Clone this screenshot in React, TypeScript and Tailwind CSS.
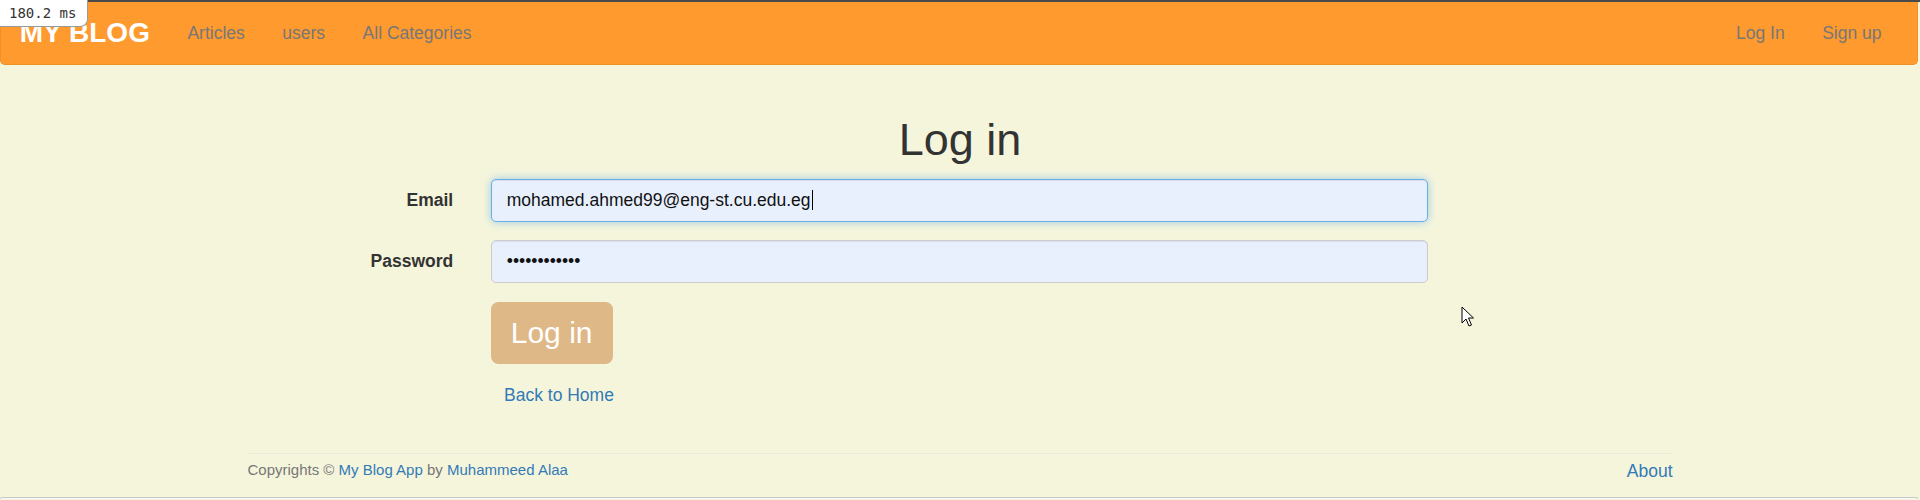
import React from 'react';

const navLinks = ['Articles', 'users', 'All Categories'];

function TimingBadge() {
  return (
    <div className="absolute left-0 top-0 z-20 flex h-[27px] items-center rounded-br-[8px] border-b border-r border-[#9a9a9a] bg-white pl-[9px] pr-[11px] font-['DejaVu_Sans_Mono','Liberation_Mono',monospace] text-[14px] leading-[18px] text-[#333]">
      180.2 ms
    </div>
  );
}

function Cursor() {
  return (
    <svg className="absolute left-[1461px] top-[306px] z-20" width="14" height="22" viewBox="0 0 14 22">
      <path d="M1 1 L1 17 L5 13 L8 20 L10.5 19 L7.5 12 L12.5 12 Z" fill="#fff" stroke="#000" strokeWidth="1" strokeLinejoin="round" />
    </svg>
  );
}

function Navbar() {
  return (
    <nav className="mr-[2px] flex h-[63px] items-center justify-between rounded-b-[5px] border border-t-0 border-[#ef9129] bg-[#fe9a2e] pl-[18.75px] pr-[16.75px]">
      <div className="flex items-center">
        <a href="#" className="pr-[18.75px] text-[28px] font-bold leading-[30px] text-white">
          MY BLOG
        </a>
        {navLinks.map((l) => (
          <a key={l} href="#" className="px-[18.75px] text-[17.5px] leading-[25px] text-[#777]">
            {l}
          </a>
        ))}
      </div>
      <div className="flex items-center">
        <a href="#" className="px-[18.75px] text-[17.5px] leading-[25px] text-[#777]">
          Log In
        </a>
        <a href="#" className="px-[18.75px] text-[17.5px] leading-[25px] text-[#777]">
          Sign up
        </a>
      </div>
    </nav>
  );
}

function LoginForm() {
  return (
    <form className="ml-[29.5px] w-[1170px]" onSubmit={(e) => e.preventDefault()}>
      <div className="mb-[18.75px] flex">
        <label className="w-[195px] shrink-0 pr-[18.75px] pt-[8.75px] text-right font-bold leading-[25px]">Email</label>
        <div className="flex-1 px-[18.75px]">
          <div
            role="textbox"
            className="flex h-[42.5px] items-center rounded-[5px] border border-[#66afe9] bg-[#e8f0fe] px-[15px] text-[17.5px] text-[#111] shadow-[inset_0_1px_1px_rgba(0,0,0,0.075),0_0_8px_rgba(102,175,233,0.6)]"
          >
            <span>mohamed.ahmed99@eng-st.cu.edu.eg</span>
            <span className="ml-[1px] inline-block h-[20px] w-px bg-black" />
          </div>
        </div>
      </div>
      <div className="mb-[18.75px] flex">
        <label className="w-[195px] shrink-0 pr-[18.75px] pt-[8.75px] text-right font-bold leading-[25px]">Password</label>
        <div className="flex-1 px-[18.75px]">
          <input
            type="password"
            readOnly
            value="mohamedahmed"
            className="block h-[42.5px] w-full rounded-[5px] border border-[#ccc] bg-[#e8f0fe] px-[15px] font-['Liberation_Sans',Arial,sans-serif] text-[17.5px] text-[#111] shadow-[inset_0_1px_1px_rgba(0,0,0,0.075)] outline-none"
          />
        </div>
      </div>
      <div className="pl-[213.75px]">
        <button type="submit" className="rounded-[7.5px] bg-[#deb887] px-[20px] py-[10px] text-[30px] leading-[42.8px] text-white">
          Log in
        </button>
      </div>
      <div className="mt-[19px] pl-[227px]">
        <a href="#" className="text-[17.5px] leading-[25px] text-[#337ab7]">
          Back to Home
        </a>
      </div>
    </form>
  );
}

export default function App() {
  return (
    <div className="relative min-h-screen overflow-hidden bg-[#f5f5dc] font-['Liberation_Sans',Arial,sans-serif] text-[17.5px] leading-[25px] text-[#333]">
      <TimingBadge />
      <div className="h-[2px] bg-[#4a4a4a]" />
      <Navbar />
      <main className="mx-auto w-[1462.5px] px-[18.75px] pt-[25px]">
        <h1 className="mb-[14.5px] mt-[25px] text-center text-[45px] font-normal leading-[49.5px] text-[#333]">Log in</h1>
        <LoginForm />
        <footer className="mt-[44.5px]">
          <hr className="border-0 border-t border-[#e9e9de]" />
          <div className="flex items-start justify-between pt-[5.5px]">
            <p className="text-[15px] leading-[21.4px] text-[#777]">
              Copyrights © <a href="#" className="text-[#337ab7]">My Blog App</a> by{' '}
              <a href="#" className="text-[#337ab7]">Muhammeed Alaa</a>
            </p>
            <a href="#" className="text-[17.5px] leading-[25px] text-[#337ab7]">
              About
            </a>
          </div>
        </footer>
      </main>
      <div className="mr-[2px] mt-[13px] h-[2px] rounded-t-[5px] border border-b-0 border-[#c8c8c8] bg-[#f8f8f8]" />
      <Cursor />
    </div>
  );
}
